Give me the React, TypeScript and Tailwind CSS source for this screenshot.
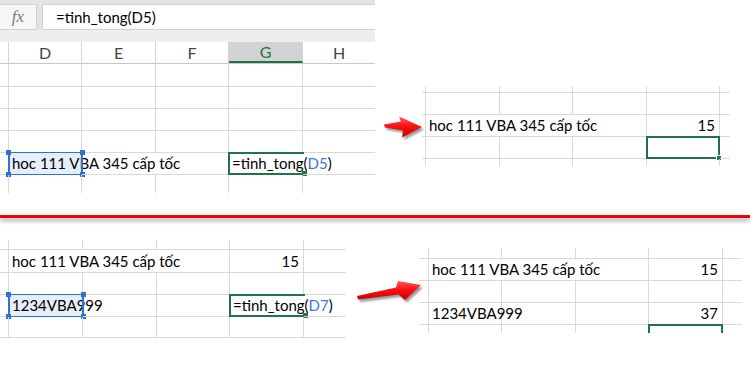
import React from 'react';

type Sel = 'blue' | 'green' | 'edit' | 'greenTop';

type Cell = {
  text?: React.ReactNode;
  right?: boolean;
  noR?: boolean;
  sel?: Sel;
};

type SheetProps = {
  cols: string[];
  rows: string[];
  cells: Record<string, Cell>;
  lastRowLine?: boolean;
};

const Selection: React.FC<{ kind: Sel }> = ({ kind }) => {
  if (kind === 'blue') {
    return (
      <div className="absolute -top-px -left-px -right-px -bottom-px border-y border-x-2 border-[#2f6fd6]">
        <div className="absolute -left-[4px] -top-[3px] w-[5px] h-[5px] bg-[#2f6fd6]" />
        <div className="absolute -right-[4px] -top-[3px] w-[5px] h-[5px] bg-[#2f6fd6]" />
        <div className="absolute -left-[4px] -bottom-[3px] w-[5px] h-[5px] bg-[#2f6fd6]" />
        <div className="absolute -right-[4px] -bottom-[3px] w-[5px] h-[5px] bg-[#2f6fd6]" />
      </div>
    );
  }
  if (kind === 'edit') {
    return (
      <div className="absolute -top-px -left-px -right-px -bottom-px border-2 border-r-0 border-[#217346]">
        <div className="absolute -right-[3px] -bottom-[3px] w-[5px] h-[5px] bg-[#217346]" />
      </div>
    );
  }
  if (kind === 'greenTop') {
    return <div className="absolute -top-px -left-px -right-px bottom-0 border-2 border-b-0 border-[#217346]" />;
  }
  return (
    <div className="absolute -top-px -left-px -right-px -bottom-px border-2 border-[#217346]">
      <div className="absolute -right-[4px] -bottom-[4px] w-[6px] h-[6px] bg-[#217346] border border-white" />
    </div>
  );
};

const Sheet: React.FC<SheetProps> = ({ cols, rows, cells, lastRowLine }) => (
  <div className="flex flex-col">
    {rows.map((h, r) => (
      <div key={r} className={`flex ${h}`}>
        {cols.map((w, c) => {
          const cell = cells[`${r}-${c}`] ?? {};
          const lastC = c === cols.length - 1;
          const lastR = r === rows.length - 1;
          const cls = [
            'relative shrink-0 flex items-center whitespace-nowrap border-[#d9d9d9]',
            w,
            !lastC && !cell.noR ? 'border-r' : '',
            !lastR || lastRowLine ? 'border-b' : '',
            cell.right ? 'justify-end pr-[4px]' : 'pl-[3px]',
            cell.sel === 'blue' ? 'bg-[#e6eefa]' : '',
          ].join(' ');
          return (
            <div key={c} className={cls}>
              {cell.text !== undefined && <span className="relative z-0">{cell.text}</span>}
              {cell.sel && <Selection kind={cell.sel} />}
            </div>
          );
        })}
      </div>
    ))}
  </div>
);

const Formula: React.FC<{ cell: string }> = ({ cell }) => (
  <>
    =tinh_tong(<span className="text-[#3c78d8]">{cell}</span>)
  </>
);

const HOC = 'hoc 111 VBA 345 cấp tốc';

const Arrow: React.FC<{ id: string; d: string; w: number; h: number; className: string }> = ({ id, d, w, h, className }) => (
  <svg className={className} width={w} height={h} viewBox={`0 0 ${w} ${h}`}>
    <defs>
      <linearGradient id={`g-${id}`} x1="0" y1="0" x2="0" y2="1">
        <stop offset="0" stopColor="#ff5a5a" />
        <stop offset="0.45" stopColor="#ff1010" />
        <stop offset="1" stopColor="#c40000" />
      </linearGradient>
      <filter id={`f-${id}`} x="-20%" y="-20%" width="140%" height="140%">
        <feGaussianBlur stdDeviation="1.2" />
      </filter>
    </defs>
    <path d={d} transform="translate(2 2.5)" fill="#000" opacity="0.4" filter={`url(#f-${id})`} />
    <path d={d} fill={`url(#g-${id})`} />
  </svg>
);

const App: React.FC = () => {
  return (
    <div className="relative w-[750px] h-[391px] bg-white overflow-hidden text-[15px] text-black font-['Lato','Noto_Sans',sans-serif]">
      {/* top half */}
      <div className="flex h-[215px]">
        <div className="w-[375px] flex flex-col">
          <div className="h-[30px] bg-[#e4e4e4] pt-[4px] flex gap-[5px]">
            <div className="w-[37px] bg-[#f6f6f6] border border-l-0 border-[#d2d2d2] flex items-center justify-center">
              <span className="italic text-[17px] text-[#7a7a7a] font-['Liberation_Serif',serif]">fx</span>
            </div>
            <div className="flex-1 bg-white border border-r-0 border-[#d2d2d2] pl-[13px] flex items-center">
              =tinh_tong(D5)
            </div>
          </div>
          <div className="h-[12px] bg-[#eeeeee]" />
          <div className="h-[22px] flex border-b border-[#c9c9c9] text-[#444] text-[16px]">
            <div className="w-[9px] border-r border-[#d4d4d4]" />
            <div className="w-[73px] border-r border-[#d4d4d4] flex items-center justify-center">D</div>
            <div className="w-[74px] border-r border-[#d4d4d4] flex items-center justify-center">E</div>
            <div className="w-[73px] border-r border-[#d4d4d4] flex items-center justify-center">F</div>
            <div className="w-[74px] border-r border-[#d4d4d4] flex items-center justify-center bg-[#d3d3d3] text-[#217346] border-b-2 border-b-[#217346]">G</div>
            <div className="w-[72px] flex items-center justify-center">H</div>
          </div>
          <Sheet
            cols={['w-[9px]', 'w-[73px]', 'w-[74px]', 'w-[73px]', 'w-[74px]', 'w-[72px]']}
            rows={['h-[23px]', 'h-[22px]', 'h-[22px]', 'h-[22px]', 'h-[22px]', 'h-[18px]']}
            cells={{
              '4-1': { text: HOC, noR: true, sel: 'blue' },
              '4-2': { noR: true },
              '4-4': { text: <Formula cell="D5" />, noR: true, sel: 'edit' },
            }}
          />
        </div>
        <div className="flex-1 pt-[86px] pl-[47px]">
          <Sheet
            cols={['w-[3px]', 'w-[74px]', 'w-[73px]', 'w-[74px]', 'w-[73px]', 'w-[10px]']}
            rows={['h-[7px]', 'h-[22px]', 'h-[22px]', 'h-[22px]', 'h-[7px]']}
            cells={{
              '2-1': { text: HOC, noR: true },
              '2-2': { noR: true },
              '2-4': { text: '15', right: true },
              '3-4': { sel: 'green' },
            }}
          />
        </div>
      </div>

      {/* separator */}
      <div className="relative z-10 h-[3px] bg-[#f00000] shadow-[0_3px_4px_rgba(0,0,0,0.35)]" />

      {/* bottom half */}
      <div className="flex">
        <div className="w-[375px] pt-[22px]">
          <Sheet
            cols={['w-[9px]', 'w-[74px]', 'w-[74px]', 'w-[73px]', 'w-[74px]', 'w-[42px]']}
            rows={['h-[10px]', 'h-[23px]', 'h-[22px]', 'h-[22px]', 'h-[21px]']}
            lastRowLine
            cells={{
              '1-1': { text: HOC, noR: true },
              '1-2': { noR: true },
              '1-4': { text: '15', right: true },
              '3-1': { text: '1234VBA999', noR: true, sel: 'blue' },
              '3-4': { text: <Formula cell="D7" />, noR: true, sel: 'edit' },
            }}
          />
        </div>
        <div className="flex-1 pt-[30px] pl-[44px]">
          <Sheet
            cols={['w-[10px]', 'w-[73px]', 'w-[74px]', 'w-[73px]', 'w-[74px]', 'w-[19px]']}
            rows={['h-[11px]', 'h-[22px]', 'h-[22px]', 'h-[22px]', 'h-[8px]']}
            cells={{
              '1-1': { text: HOC, noR: true },
              '1-2': { noR: true },
              '1-4': { text: '15', right: true },
              '3-1': { text: '1234VBA999' },
              '3-4': { text: '37', right: true },
              '4-4': { sel: 'greenTop' },
            }}
          />
        </div>
      </div>

      {/* arrows */}
      <Arrow
        id="a1"
        w={48}
        h={28}
        className="absolute left-[380px] top-[114px]"
        d="M4 10.5 L21 7.5 L19 2.5 L42 13 L22 23.5 L23 16.5 L5 13.5 Z"
      />
      <Arrow
        id="a2"
        w={74}
        h={30}
        className="absolute left-[352px] top-[276px]"
        d="M5 20 L44 11.5 L46 5 L69 9 L53 24 L46.5 18.5 L6 23.5 Z"
      />
    </div>
  );
};

export default App;
